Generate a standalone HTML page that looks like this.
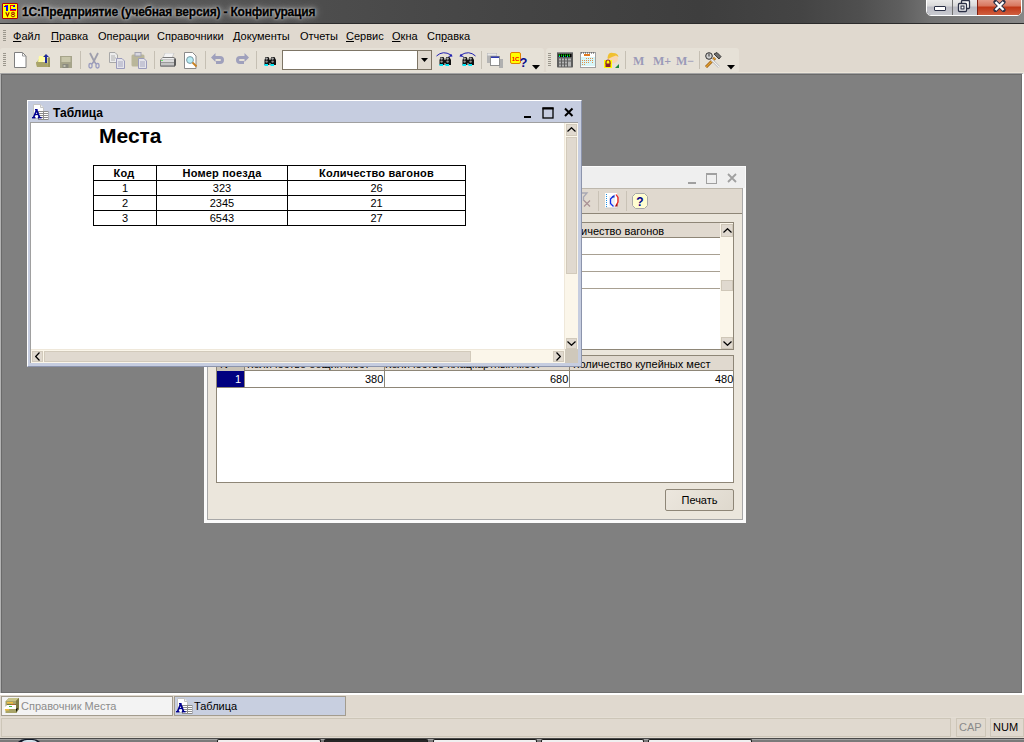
<!DOCTYPE html>
<html><head><meta charset="utf-8">
<style>
*{margin:0;padding:0;box-sizing:border-box}
html,body{width:1024px;height:742px;overflow:hidden;background:#808080;font-family:"Liberation Sans",sans-serif;font-size:11px;color:#000;position:relative}
div,span,svg{position:absolute}
.t{white-space:nowrap;line-height:13px}
#title{left:0;top:0;width:1024px;height:24px;background:linear-gradient(90deg,#7a7a7a 0px,#6e6e6e 30px,#5c5c5c 120px,#4e4e4e 300px,#454545 500px,#3e3e3e 700px,#444 800px,#4f4f4f 860px,#5e5e5e 900px,#727272 930px,#888 1024px);border-bottom:1px solid #2c2c2c}
#menubar{left:0;top:24px;width:1024px;height:24px;background:#e0d9cf}
#toolbar{left:0;top:48px;width:1024px;height:25px;background:#e0d9cf;box-shadow:inset 0 -1px 0 #ebe5d9}
.band{top:0;height:25px;background:#e6e1d7;border-radius:3px}
.grip{width:3px;background:repeating-linear-gradient(180deg,#9a968c 0,#9a968c 1px,transparent 1px,transparent 2px)}
.sep{top:3px;width:1px;height:18px;background:#c5bfb3}
.menu .t{top:6px}
.u{text-decoration:underline;text-underline-offset:1px}
#mdi{left:0;top:73px;width:1024px;height:620px;background:#808080;border-top:1px solid #a4a4a4;border-left:1px solid #b4b4b4;border-right:2px solid #fff;box-shadow:inset 1px 1px 0 #6a6a6a,inset -1px -1px 0 #6e6e6e}
#tabs{left:0;top:693px;width:1024px;height:45px;background:#e0d9cf;border-top:2px solid #fff}
#taskbar{left:0;top:738px;width:1024px;height:4px;background:#7a7a7a;border-top:1px solid #4a4a4a;box-shadow:inset 0 1px 0 #a0a0a0}
</style></head><body>
<div id="title">
  <svg style="left:2px;top:3px" width="16" height="16" viewBox="0 0 16 16"><path d="M1 0h14l1 1v14l-1 1H1l-1-1V1z" fill="#b00000"/><rect x="1" y="1" width="14" height="14" fill="#ffff00"/><path d="M2 3h2V2h2v6H4V4H2z" fill="#0000ff"/><path d="M3 2h2v1H3z" fill="#ff0000"/><path d="M8 2h5v2h-2V3H9v3h5v2H8z" fill="#0000ff"/><path d="M8 2h4v1H9v4h5v1H8z" fill="#ff0000"/><path d="M3.8 9.2l1.7 4 1.7-4" fill="none" stroke="#a00000" stroke-width="1.1"/><ellipse cx="11" cy="10.2" rx="1.6" ry="1" fill="none" stroke="#a00000" stroke-width="0.9"/><ellipse cx="11" cy="12.6" rx="1.7" ry="1.2" fill="none" stroke="#a00000" stroke-width="0.9"/></svg>
  <span class="t" style="left:22px;top:6px;font-size:12px;font-weight:700;letter-spacing:-0.18px;-webkit-text-stroke:0.35px #000;text-shadow:0 0 2px rgba(255,255,255,.9),0 0 5px rgba(255,255,255,.7),0 0 10px rgba(230,230,230,.6)">1С:Предприятие (учебная версия) - Конфигурация</span>
  <div style="left:926px;top:-3px;width:96px;height:19px;border:1px solid #fff;border-radius:0 0 5px 5px;background:#3a3a3a;box-shadow:0 0 1px #777"></div>
  <div style="left:927px;top:-2px;width:26px;height:17px;border-radius:0 0 0 4px;border-right:1px solid #707070;background:linear-gradient(180deg,#f0f0f0 0%,#dadada 45%,#bcbcc4 55%,#c8cad0 100%)"></div>
  <div style="left:953px;top:-2px;width:25px;height:17px;border-right:1px solid #802010;background:linear-gradient(180deg,#f0f0f0 0%,#dadada 45%,#bcbcc4 55%,#c8cad0 100%)"></div>
  <div style="left:978px;top:-2px;width:43px;height:17px;border-radius:0 0 4px 0;background:linear-gradient(180deg,#e8a898 0%,#d87860 45%,#c03818 55%,#d06040 100%)"></div>
  <div style="left:934px;top:6px;width:12px;height:5px;border:1.5px solid #2a2f45;border-radius:1px;background:#fff"></div>
  <svg style="left:957px;top:0px" width="14" height="13" viewBox="0 0 14 13"><rect x="4.5" y="0.5" width="8" height="8" rx="1" fill="#fff" stroke="#2a2f45" stroke-width="1.3"/><rect x="1.5" y="3.5" width="8" height="8" rx="1" fill="#fff" stroke="#2a2f45" stroke-width="1.3"/><rect x="4" y="6" width="3" height="3" fill="none" stroke="#2a2f45" stroke-width="1.1"/></svg>
  <svg style="left:993px;top:0px" width="13" height="12" viewBox="0 0 13 12"><path d="M2.5 2l8 8M10.5 2l-8 8" stroke="#2a2f45" stroke-width="4.2" stroke-linecap="round"/><path d="M2.5 2l8 8M10.5 2l-8 8" stroke="#fff" stroke-width="2.4"/></svg>
</div>
<div id="menubar" class="menu">
  <div class="grip" style="left:3px;top:6px;height:12px"></div>
  <span class="t" style="left:13px"><span class="u" style="position:static">Ф</span>айл</span>
  <span class="t" style="left:51px"><span class="u" style="position:static">П</span>равка</span>
  <span class="t" style="left:98px">Операции</span>
  <span class="t" style="left:157px">Справочники</span>
  <span class="t" style="left:233px">Документы</span>
  <span class="t" style="left:300px">Отчеты</span>
  <span class="t" style="left:346px"><span class="u" style="position:static">С</span>ервис</span>
  <span class="t" style="left:392px"><span class="u" style="position:static">О</span>кна</span>
  <span class="t" style="left:427px">Сп<span class="u" style="position:static">р</span>авка</span>
</div>
<div id="toolbar">
  <div class="band" style="left:0;width:544px"></div>
  <div class="band" style="left:546px;width:193px"></div>

  <div class="grip" style="left:3px;top:5px;height:14px"></div>
  <svg style="left:14px;top:4px" width="13" height="16" viewBox="0 0 13 16"><path d="M0.5 0.5h8l3.5 3.5v11.5h-11.5z" fill="#fff" stroke="#7f7f7f"/><path d="M8.5 0.5v3.5h3.5" fill="none" stroke="#9a9a9a"/></svg>
  <svg style="left:35px;top:4px" width="17" height="16" viewBox="0 0 17 16"><path d="M1 11l3-4h8l-1 8H2z" fill="#b8b478"/><path d="M4 4h4l2-2v9H3z" fill="#fffca0"/><path d="M6 11h6V6" fill="#f4f4f4"/><path d="M1 10h11l3 5H2z" fill="#a9a46a"/><path d="M12 6h3v9h-2z" fill="#c8c47e"/><path d="M11 2l3 3h-2v6h-2V5H8z" fill="#1f2a9a"/><path d="M14 5v10" stroke="#6b6838" stroke-width="1"/></svg>
  <svg style="left:60px;top:8px" width="13" height="13" viewBox="0 0 13 13"><rect x="0" y="0" width="12" height="12" fill="#a6a48a"/><rect x="1.5" y="1" width="9" height="5" fill="#c8c6aa"/><rect x="2.5" y="8" width="6" height="4" fill="#8b8b80"/><rect x="3.5" y="9" width="2" height="2" fill="#c0c0b0"/></svg>
  <div class="sep" style="left:80px"></div>
  <svg style="left:88px;top:4px" width="12" height="17" viewBox="0 0 12 17"><path d="M2 1l4 8 4-8" fill="none" stroke="#9e9eac" stroke-width="1.8"/><path d="M6 9L4 12M6 9l2 3" stroke="#9c9cb4" stroke-width="1.5"/><rect x="1" y="11.5" width="3" height="4.5" rx="1.4" fill="none" stroke="#9a9cc0" stroke-width="1.3"/><rect x="8" y="11.5" width="3" height="4.5" rx="1.4" fill="none" stroke="#9a9cc0" stroke-width="1.3"/></svg>
  <svg style="left:109px;top:4px" width="17" height="17" viewBox="0 0 17 17"><path d="M0.5 0.5h5.5l2.5 2.5v7.5h-8z" fill="#ececec" stroke="#a8a8a8"/><path d="M2 4h4M2 6h5M2 8h4" stroke="#b0b0b0"/><path d="M7.5 6.5h5.5l2.5 2.5v7.5h-8z" fill="#e4e4ea" stroke="#9c9cbc"/><path d="M9 10h5M9 12h5M9 14h5" stroke="#a8a8c0"/></svg>
  <svg style="left:131px;top:4px" width="17" height="17" viewBox="0 0 17 17"><rect x="0.5" y="2.5" width="13" height="12" rx="1.5" fill="#b9b69a"/><rect x="4" y="0.5" width="6" height="3.5" fill="#d8d8e0" stroke="#a4a4b0"/><path d="M7.5 6.5h5.5l2.5 2.5v7.5h-8z" fill="#e4e4ea" stroke="#9c9cbc"/><path d="M9 10h5M9 12h5M9 14h5" stroke="#a8a8c0"/></svg>
  <div class="sep" style="left:154px"></div>
  <svg style="left:160px;top:5px" width="17" height="14" viewBox="0 0 17 14"><path d="M5 0h9l-2 5H3z" fill="#f4f4f4" stroke="#c8c8c8" stroke-width="0.8"/><path d="M3 4h11l2 2v6l-2 2H1l-1-1V7z" fill="#7a7a7a"/><path d="M2.5 5h11l1.5 1.5H1z" fill="#f0f0f0"/><rect x="1" y="6.5" width="13" height="2.5" fill="#dcdcdc"/><rect x="1" y="9" width="13" height="1" fill="#9a9a9a"/><rect x="1" y="10" width="13" height="2.5" fill="#c4c4c4"/><path d="M14 6.5l2-1v6.5l-2 2z" fill="#5c5c5c"/><rect x="1" y="12.5" width="13" height="1.5" fill="#8c8c8c"/><rect x="1.5" y="7" width="1" height="1" fill="#00e000"/></svg>
  <svg style="left:184px;top:4px" width="14" height="17" viewBox="0 0 14 17"><path d="M0.5 0.5h8l3.5 3.5v12.5h-11.5z" fill="#fff" stroke="#8a8a8a"/><circle cx="6" cy="8" r="3.4" fill="#b8ecf4" stroke="#7a9aa4"/><path d="M8.5 10.5l4 4" stroke="#c88020" stroke-width="1.8"/></svg>
  <div class="sep" style="left:205px"></div>
  <svg style="left:211px;top:5px" width="14" height="14" viewBox="0 0 14 14"><path d="M0 4.5L4.5 0v3h4.5a4 4 0 0 1 0 8H5v-3h4a1 1 0 0 0 0-2H4.5v3z" fill="#9fa0bc"/></svg>
  <svg style="left:235px;top:5px" width="14" height="14" viewBox="0 0 14 14"><path d="M14 4.5L9.5 0v3H5a4 4 0 0 0 0 8h4v-3H5a1 1 0 0 1 0-2h4.5v3z" fill="#9fa0bc"/></svg>
  <div class="sep" style="left:256px"></div>
  <svg style="left:264px;top:8px" width="13" height="11" viewBox="0 0 13 11"><path d="M1.5 1h3l1 2v6H0.5V4z M7.5 1h3l1.5 3v5H6.5V3z" fill="#101010"/><rect x="5" y="4" width="2" height="3" fill="#101010"/><circle cx="2.6" cy="2.6" r="1.2" fill="#a8a8a8"/><circle cx="2.6" cy="5.6" r="1.2" fill="#909090"/><circle cx="8.6" cy="2.6" r="1.2" fill="#a8a8a8"/><circle cx="8.6" cy="5.6" r="1.2" fill="#909090"/><rect x="0.5" y="8" width="3.5" height="2" fill="#00e4f4"/><rect x="6.5" y="8" width="3.5" height="2" fill="#00e4f4"/></svg>
  <div style="left:282px;top:2px;width:150px;height:20px;background:#fff;border:1px solid #7d7566"></div>
  <div style="left:417px;top:3px;width:14px;height:18px;background:#e0d9cf;border-left:1px solid #7d7566"></div>
  <svg style="left:421px;top:10px" width="7" height="4" viewBox="0 0 7 4"><path d="M0 0h7L3.5 4z" fill="#000"/></svg>
  <svg style="left:436px;top:3px" width="17" height="15" viewBox="0 0 17 15"><path d="M0.5 5Q7-1 15 4" fill="none" stroke="#2020b0" stroke-width="1"/><path d="M16.5 5.5l-4.5 0.5 3.5-3z" fill="#2020b0"/><g transform="translate(3,5)"><path d="M1.5 1h3l1 2v6H0.5V4z M7.5 1h3l1.5 3v5H6.5V3z" fill="#101010"/><rect x="5" y="4" width="2" height="3" fill="#101010"/><circle cx="2.6" cy="2.6" r="1.2" fill="#a8a8a8"/><circle cx="2.6" cy="5.6" r="1.2" fill="#909090"/><circle cx="8.6" cy="2.6" r="1.2" fill="#a8a8a8"/><circle cx="8.6" cy="5.6" r="1.2" fill="#909090"/><rect x="0.5" y="8" width="3.5" height="2" fill="#00e4f4"/><rect x="6.5" y="8" width="3.5" height="2" fill="#00e4f4"/></g></svg>
  <svg style="left:459px;top:3px" width="17" height="15" viewBox="0 0 17 15"><path d="M16.5 5Q10-1 2 4" fill="none" stroke="#2020b0" stroke-width="1"/><path d="M0.5 5.5l4.5 0.5-3.5-3z" fill="#2020b0"/><g transform="translate(3,5)"><path d="M1.5 1h3l1 2v6H0.5V4z M7.5 1h3l1.5 3v5H6.5V3z" fill="#101010"/><rect x="5" y="4" width="2" height="3" fill="#101010"/><circle cx="2.6" cy="2.6" r="1.2" fill="#a8a8a8"/><circle cx="2.6" cy="5.6" r="1.2" fill="#909090"/><circle cx="8.6" cy="2.6" r="1.2" fill="#a8a8a8"/><circle cx="8.6" cy="5.6" r="1.2" fill="#909090"/><rect x="0.5" y="8" width="3.5" height="2" fill="#00e4f4"/><rect x="6.5" y="8" width="3.5" height="2" fill="#00e4f4"/></g></svg>
  <div class="sep" style="left:481px"></div>
  <svg style="left:487px;top:5px" width="17" height="15" viewBox="0 0 17 15"><rect x="0" y="0" width="10" height="10" fill="#b4b4b4"/><rect x="0.5" y="0.5" width="9" height="2" fill="#e8e8e8"/><rect x="12" y="6" width="4" height="9" fill="#b0b0b0"/><rect x="3" y="3" width="10" height="10" fill="#909090"/><rect x="4" y="5" width="8" height="7" fill="#fff"/><rect x="4" y="3.5" width="8" height="1.5" fill="#303ab0"/></svg>
  <svg style="left:510px;top:4px" width="18" height="16" viewBox="0 0 18 16"><rect x="0.5" y="0.5" width="10" height="11" rx="1.5" fill="#ffff00" stroke="#e08000"/><text x="5.5" y="8.5" font-size="6" font-weight="700" font-family="Liberation Sans" fill="#ff0000" text-anchor="middle">1С</text><text x="13.5" y="15" font-size="13" font-weight="700" font-family="Liberation Sans" fill="#0a0a8a" text-anchor="middle">?</text></svg>
  <svg style="left:532px;top:17px" width="8" height="5" viewBox="0 0 8 5"><path d="M0 0h8L4 4.5z" fill="#000"/></svg>
  <div class="grip" style="left:548px;top:5px;height:14px"></div>
  <svg style="left:557px;top:4px" width="17" height="16" viewBox="0 0 17 16"><rect x="0" y="0" width="16" height="15.5" rx="0.8" fill="#5e5e5e"/><rect x="0" y="0" width="16" height="1" fill="#8a8a8a"/><rect x="1.5" y="2" width="13" height="3" fill="#000"/><path d="M2 3.5h12" stroke="#00e000" stroke-width="2" stroke-dasharray="1 1"/><path d="M2 4.5h12" stroke="#00d0e0" stroke-width="1" stroke-dasharray="1 3"/><g fill="#b4b4b4"><rect x="2" y="6.5" width="2" height="2"/><rect x="5" y="6.5" width="2" height="2"/><rect x="8" y="6.5" width="2" height="2"/><rect x="2" y="9.5" width="2" height="2"/><rect x="5" y="9.5" width="2" height="2"/><rect x="8" y="9.5" width="2" height="2"/><rect x="2" y="12.5" width="2" height="2"/><rect x="5" y="12.5" width="2" height="2"/><rect x="8" y="12.5" width="2" height="2"/><rect x="11" y="6.5" width="3" height="2"/><rect x="11" y="9.5" width="3" height="5"/></g></svg>
  <svg style="left:580px;top:4px" width="17" height="17" viewBox="0 0 17 17"><rect x="0.5" y="0.5" width="15" height="15" fill="#fff" stroke="#a0a0a0"/><path d="M1 1h14" stroke="#404040" stroke-dasharray="1 1"/><rect x="1" y="5" width="14" height="9" fill="#d8f6f8"/><g fill="#e0904a"><rect x="6" y="6" width="1" height="1"/><rect x="8" y="6" width="1" height="1"/><rect x="10" y="6" width="1" height="1"/><rect x="12" y="6" width="1" height="1"/><rect x="2" y="8" width="1" height="1"/><rect x="4" y="8" width="1" height="1"/><rect x="6" y="8" width="1" height="1"/><rect x="8" y="8" width="1" height="1"/><rect x="10" y="8" width="1" height="1"/><rect x="12" y="8" width="1" height="1"/><rect x="2" y="10" width="1" height="1"/><rect x="4" y="10" width="1" height="1"/><rect x="6" y="10" width="1" height="1"/><rect x="8" y="10" width="1" height="1"/><rect x="12" y="10" width="1" height="1"/><rect x="2" y="12" width="1" height="1"/><rect x="4" y="12" width="1" height="1"/></g><rect x="4" y="2" width="6" height="2" fill="#e07a20"/></svg>
  <svg style="left:603px;top:4px" width="17" height="17" viewBox="0 0 17 17"><path d="M12 16l4-4v4z" fill="#208a40"/><circle cx="10" cy="6.5" r="5" fill="#f8d6b0"/><path d="M4.5 6Q5 0 10 1q5 0 5.5 4L13 3.5 9 5 5 7z" fill="#f0c030"/><rect x="1" y="8" width="8" height="8" fill="#ffff00"/><path d="M3 12v-2a2 2 0 0 1 4 0v2" fill="none" stroke="#8a2030" stroke-width="1.2"/><rect x="2.5" y="11.5" width="5" height="3.5" fill="#8a2030"/></svg>
  <div class="sep" style="left:625px"></div>
  <span class="t" style="left:633px;top:7px;font-family:'Liberation Serif';font-size:12px;font-weight:700;color:#9a9ab8">M</span>
  <span class="t" style="left:653px;top:7px;font-family:'Liberation Serif';font-size:12px;font-weight:700;color:#9a9ab8">M+</span>
  <span class="t" style="left:676px;top:7px;font-family:'Liberation Serif';font-size:12px;font-weight:700;color:#9a9ab8">M&#8722;</span>
  <div class="sep" style="left:699px"></div>
  <svg style="left:705px;top:4px" width="17" height="17" viewBox="0 0 17 17"><path d="M1 15L10 6" stroke="#9a5a10" stroke-width="3"/><path d="M1 15L10 6" stroke="#e0a030" stroke-width="1.4"/><path d="M6 7l8 8" stroke="#c8c8c8" stroke-width="2.6"/><path d="M6 7l8 8" stroke="#f0f0f0" stroke-width="1"/><circle cx="4" cy="4" r="3.3" fill="#d0d0d0" stroke="#303030" stroke-width="1"/><path d="M4 1.5v3" stroke="#303030"/><path d="M9 2l3-1.5 4 4-2 2.5z" fill="#707070" stroke="#202020" stroke-width="0.8"/></svg>
  <svg style="left:727px;top:17px" width="8" height="5" viewBox="0 0 8 5"><path d="M0 0h8L4 4.5z" fill="#000"/></svg>
</div>
<div id="mdi"></div>
<!-- back window -->
<div id="back" style="left:204px;top:166px;width:542px;height:357px;background:#fbfbfb">
  <div style="left:1px;top:1px;width:540px;height:21px;background:#efefef"></div>
  <svg style="left:484px;top:7px" width="50" height="12" viewBox="0 0 50 12"><rect x="0" y="9" width="8" height="2" fill="#a0a0a0"/><rect x="18.5" y="0.5" width="10" height="10" fill="none" stroke="#a0a0a0" stroke-width="1"/><rect x="18" y="0" width="11" height="2" fill="#a0a0a0"/><path d="M40 1l8 8M48 1l-8 8" stroke="#a0a0a0" stroke-width="1.8"/></svg>
  <div style="left:3px;top:22px;width:536px;height:332px;background:#ebe6dc;border:1px solid #a8a8a8;border-top:none"></div>
  <!-- toolbar -->
  <div style="left:4px;top:22px;width:534px;height:26px;background:#e0d9cf;border-bottom:1px solid #8e8677;border-top:1px solid #bdb7ac"></div>
  <svg style="left:374px;top:26px" width="14" height="15" viewBox="0 0 14 15"><path d="M0 1h9L5.5 5v4" fill="none" stroke="#a8a8b4" stroke-width="1.3"/><path d="M6 8.5l6 6M12 8.5l-6 6" stroke="#a89094" stroke-width="1.2"/></svg>
  <div style="left:394px;top:25px;width:1px;height:20px;background:#c9c2b6"></div>
  <svg style="left:401px;top:27px" width="16" height="16" viewBox="0 0 16 16"><rect x="0" y="0" width="12" height="15" fill="#fff"/><rect x="0.5" y="14.5" width="12" height="1" fill="#c8c8c8"/><path d="M1.5 1v14" stroke="#2090e0" stroke-dasharray="1 1"/><path d="M4 4h6M4 6h6M4 8h6M4 10h6M4 12h6" stroke="#d8d8e0" stroke-width="0.8"/><path d="M8.5 13.5L5.5 10.5V6l3-3" fill="none" stroke="#1030f0" stroke-width="1.3"/><path d="M9.5 1.5v3h-3z" fill="#1030c0"/><path d="M11 1.5l2 3v4.5l-2 3.5" fill="none" stroke="#f02020" stroke-width="1.3"/><path d="M9.5 13.5h3v-3z" fill="#a01010"/></svg>
  <div style="left:422px;top:25px;width:1px;height:20px;background:#c9c2b6"></div>
  <svg style="left:428px;top:27px" width="17" height="17" viewBox="0 0 17 17"><path d="M3.5 0.5h9l3 3v9l-3 3h-9l-3-3v-9z" fill="#fffdd0" stroke="#a8a8a8"/><text x="8" y="13" font-size="12" font-weight="700" font-family="Liberation Sans" fill="#00008a" text-anchor="middle">?</text></svg>
  <!-- upper table -->
  <div style="left:12px;top:56px;width:518px;height:128px;background:#fff;border:1px solid #8e8677"></div>
  <div style="left:13px;top:57px;width:503px;height:15px;background:#e0d9cf;border-bottom:1px solid #8e8677"></div>
  <span class="t" style="left:377px;top:59px;color:#000">ичество вагонов</span>
  <div style="left:13px;top:88px;width:503px;height:1px;background:#a8a092"></div>
  <div style="left:13px;top:105px;width:503px;height:1px;background:#a8a092"></div>
  <div style="left:13px;top:122px;width:503px;height:1px;background:#a8a092"></div>
  <div style="left:516px;top:57px;width:13px;height:126px;background:#fbf6ea"></div>
  <div style="left:517px;top:58px;width:12px;height:13px;background:#e0d9cf;border:1px solid #cfc7b8"></div>
  <svg style="left:519px;top:62px" width="9" height="5" viewBox="0 0 9 5"><path d="M0.5 4.5L4.5 0.7 8.5 4.5" fill="none" stroke="#000" stroke-width="1.2"/></svg>
  <div style="left:517px;top:114px;width:12px;height:11px;background:#e0d9cf;border:1px solid #cfc7b8"></div>
  <div style="left:517px;top:171px;width:12px;height:12px;background:#e0d9cf;border:1px solid #cfc7b8"></div>
  <svg style="left:519px;top:175px" width="9" height="5" viewBox="0 0 9 5"><path d="M0.5 0.5L4.5 4.3 8.5 0.5" fill="none" stroke="#000" stroke-width="1.2"/></svg>
  <!-- lower table -->
  <div style="left:12px;top:189px;width:518px;height:128px;background:#fff;border:1px solid #8e8677"></div>
  <div style="left:13px;top:190px;width:516px;height:15px;background:#e0d9cf;border-bottom:1px solid #8e8677"></div>
  <div style="left:13px;top:190px;width:27px;height:15px;background:#c8c2b6"></div>
  <span class="t" style="left:16px;top:192px">N</span>
  <span class="t" style="left:43px;top:192px">Количество общих мест</span>
  <span class="t" style="left:181px;top:192px">Количество плацкартных мест</span>
  <span class="t" style="left:369px;top:192px">Количество купейных мест</span>
  <div style="left:13px;top:205px;width:27px;height:16px;background:#000080"></div>
  <span class="t" style="left:31px;top:207px;color:#fff">1</span>
  <div style="left:40px;top:190px;width:1px;height:31px;background:#8e8677"></div>
  <div style="left:180px;top:190px;width:1px;height:31px;background:#8e8677"></div>
  <div style="left:365px;top:190px;width:1px;height:31px;background:#8e8677"></div>
  <div style="left:13px;top:221px;width:516px;height:1px;background:#8e8677"></div>
  <span class="t" style="left:161px;top:207px;width:18px;text-align:right">380</span>
  <span class="t" style="left:346px;top:207px;width:18px;text-align:right">680</span>
  <span class="t" style="left:511px;top:207px;width:18px;text-align:right">480</span>
  <!-- button -->
  <div style="left:461px;top:323px;width:69px;height:22px;background:linear-gradient(135deg,#ece7de,#ded8cd);border:1px solid #8e8677;border-radius:2px"></div>
  <span class="t" style="left:461px;top:328px;width:69px;text-align:center">Печать</span>
</div>

<!-- front window -->
<div id="front" style="left:27px;top:100px;width:555px;height:267px;background:#c6cde0;border-top:1px solid #fff;border-left:1px solid #fff;border-bottom:1px solid #8c94ac;border-right:1px solid #8c94ac">
  <svg style="left:4px;top:3px" width="17" height="17" viewBox="0 0 17 17"><path d="M1.5 0.5h7l3 3v11h-10z" fill="#fff" stroke="#c4c4c4"/><path d="M8.5 0.5v3h3" fill="#f4f4f4" stroke="#c4c4c4"/><rect x="6" y="7" width="10.5" height="9" fill="#8c8c8c"/><g fill="#fff"><rect x="7" y="8" width="4" height="1"/><rect x="12" y="8" width="4" height="1"/><rect x="7" y="10" width="4" height="1"/><rect x="12" y="10" width="4" height="1"/><rect x="7" y="12" width="4" height="1"/><rect x="12" y="12" width="4" height="1"/><rect x="7" y="14" width="4" height="1"/><rect x="12" y="14" width="4" height="1"/></g><path d="M4.6 6L1.6 13.5M4.6 6l3 7.5" stroke="#000090" stroke-width="1.7" fill="none"/><path d="M2.5 10.5h4.5" stroke="#000090" stroke-width="1.2"/><rect x="3" y="5" width="2.6" height="1.4" fill="#000090"/><rect x="0" y="13" width="3.5" height="1.4" fill="#000090"/><rect x="5.8" y="13" width="3.8" height="1.4" fill="#000090"/></svg>
  <span class="t" style="left:25px;top:6px;font-size:12px;font-weight:700">Таблица</span>
  <svg style="left:496px;top:6px" width="52" height="12" viewBox="0 0 52 12"><rect x="0" y="9" width="7" height="2" fill="#000"/><rect x="19" y="1" width="10" height="10" fill="none" stroke="#000" stroke-width="1.3"/><rect x="18.5" y="0.5" width="11" height="2" fill="#000"/><path d="M41 1.5l7.5 7.5M48.5 1.5L41 9" stroke="#000" stroke-width="2"/></svg>
  <div style="left:2px;top:21px;width:548px;height:241px;background:#fff;border-left:1px solid #a0a0a0;border-top:1px solid #a0a0a0"></div>
  <span class="t" style="left:71px;top:23px;font-size:21px;font-weight:700;line-height:24px">Места</span>
  <!-- table -->
  <div style="left:65px;top:64px;width:373px;height:61px;border:1px solid #000"></div>
  <div style="left:66px;top:79px;width:371px;height:1px;background:#000"></div>
  <div style="left:66px;top:94px;width:371px;height:1px;background:#000"></div>
  <div style="left:66px;top:109px;width:371px;height:1px;background:#000"></div>
  <div style="left:128px;top:65px;width:1px;height:59px;background:#000"></div>
  <div style="left:259px;top:65px;width:1px;height:59px;background:#000"></div>
  <span class="t" style="left:65px;top:66px;width:62px;text-align:center;font-weight:700;letter-spacing:0.2px">Код</span>
  <span class="t" style="left:129px;top:66px;width:130px;text-align:center;font-weight:700;letter-spacing:0.2px">Номер поезда</span>
  <span class="t" style="left:260px;top:66px;width:177px;text-align:center;font-weight:700;letter-spacing:0.2px">Количество вагонов</span>
  <span class="t" style="left:66px;top:81px;width:62px;text-align:center">1</span>
  <span class="t" style="left:129px;top:81px;width:130px;text-align:center">323</span>
  <span class="t" style="left:260px;top:81px;width:177px;text-align:center">26</span>
  <span class="t" style="left:66px;top:96px;width:62px;text-align:center">2</span>
  <span class="t" style="left:129px;top:96px;width:130px;text-align:center">2345</span>
  <span class="t" style="left:260px;top:96px;width:177px;text-align:center">21</span>
  <span class="t" style="left:66px;top:111px;width:62px;text-align:center">3</span>
  <span class="t" style="left:129px;top:111px;width:130px;text-align:center">6543</span>
  <span class="t" style="left:260px;top:111px;width:177px;text-align:center">27</span>
  <!-- v scroll -->
  <div style="left:536px;top:22px;width:14px;height:226px;background:#fbf6ea;border-left:1px solid #efe8da"></div>
  <div style="left:538px;top:23px;width:11px;height:12px;background:#e0d9cf;border:1px solid #d2cabb"></div>
  <svg style="left:539px;top:26px" width="9" height="5" viewBox="0 0 9 5"><path d="M0.5 4.5L4.5 0.7 8.5 4.5" fill="none" stroke="#000" stroke-width="1.2"/></svg>
  <div style="left:538px;top:36px;width:11px;height:137px;background:#e0d9cf;border:1px solid #d2cabb"></div>
  <div style="left:538px;top:237px;width:11px;height:11px;background:#e0d9cf;border:1px solid #d2cabb"></div>
  <svg style="left:539px;top:240px" width="9" height="5" viewBox="0 0 9 5"><path d="M0.5 0.5L4.5 4.3 8.5 0.5" fill="none" stroke="#000" stroke-width="1.2"/></svg>
  <!-- h scroll -->
  <div style="left:3px;top:248px;width:547px;height:14px;background:#fbf6ea;border-top:1px solid #efe8da"></div>
  <div style="left:4px;top:250px;width:11px;height:11px;background:#e0d9cf;border:1px solid #d2cabb"></div>
  <svg style="left:7px;top:251px" width="5" height="9" viewBox="0 0 5 9"><path d="M4.5 0.5L0.7 4.5 4.5 8.5" fill="none" stroke="#000" stroke-width="1.2"/></svg>
  <div style="left:16px;top:250px;width:427px;height:11px;background:#e0d9cf;border:1px solid #d2cabb"></div>
  <div style="left:525px;top:250px;width:11px;height:11px;background:#e0d9cf;border:1px solid #d2cabb"></div>
  <svg style="left:528px;top:251px" width="5" height="9" viewBox="0 0 5 9"><path d="M0.5 0.5L4.3 4.5 0.5 8.5" fill="none" stroke="#000" stroke-width="1.2"/></svg>
  <div style="left:537px;top:248px;width:13px;height:14px;background:#cfc8bb"></div>
</div>
<div id="tabs">
  <div style="left:1px;top:1px;width:172px;height:20px;background:#f3f3f3;border:1px solid #a39c8e"></div>
  <svg style="left:3px;top:3px" width="17" height="16" viewBox="0 0 17 16"><path d="M3 3l3-3h10v11l-3 4H3z" fill="#8e8c52"/><path d="M6 0h10l-3 3H3z" fill="#c8c48a"/><rect x="2.5" y="3" width="11" height="12" fill="#a8a468"/><path d="M13 3l3-3v11l-3 4z" fill="#7c7a44"/><rect x="4" y="4" width="6" height="1.5" fill="#f0c040"/><rect x="4" y="6.5" width="9" height="1.5" fill="#404020"/><rect x="8" y="6.5" width="4" height="1.5" fill="#f06010"/><path d="M1 10l3-3h9v4H1z" fill="#fff"/><rect x="6" y="8" width="3" height="1" fill="#40c040"/><rect x="2" y="11" width="4" height="1.5" fill="#f0c040"/><path d="M13 11l2-1-2 4z" fill="#000"/></svg>
  <span class="t" style="left:21px;top:5px;color:#8c8c8c">Справочник Места</span>
  <div style="left:174px;top:1px;width:172px;height:20px;background:#c8cfe0;border:1px solid #a39c8e"></div>
  <svg style="left:176px;top:3px" width="17" height="17" viewBox="0 0 17 17"><path d="M1.5 0.5h7l3 3v11h-10z" fill="#fff" stroke="#c4c4c4"/><path d="M8.5 0.5v3h3" fill="#f4f4f4" stroke="#c4c4c4"/><rect x="6" y="7" width="10.5" height="9" fill="#8c8c8c"/><g fill="#fff"><rect x="7" y="8" width="4" height="1"/><rect x="12" y="8" width="4" height="1"/><rect x="7" y="10" width="4" height="1"/><rect x="12" y="10" width="4" height="1"/><rect x="7" y="12" width="4" height="1"/><rect x="12" y="12" width="4" height="1"/><rect x="7" y="14" width="4" height="1"/><rect x="12" y="14" width="4" height="1"/></g><path d="M4.6 6L1.6 13.5M4.6 6l3 7.5" stroke="#000090" stroke-width="1.7" fill="none"/><path d="M2.5 10.5h4.5" stroke="#000090" stroke-width="1.2"/><rect x="3" y="5" width="2.6" height="1.4" fill="#000090"/><rect x="0" y="13" width="3.5" height="1.4" fill="#000090"/><rect x="5.8" y="13" width="3.8" height="1.4" fill="#000090"/></svg>
  <span class="t" style="left:194px;top:5px">Таблица</span>
  <div style="left:0;top:22px;width:1024px;height:1px;background:#e4ded4"></div>
  <div style="left:1px;top:23px;width:950px;height:19px;border:1px solid #cdc6b8"></div>
  <div style="left:956px;top:23px;width:30px;height:19px;border:1px solid #cdc6b8"></div>
  <span class="t" style="left:959px;top:26px;color:#8a8a8a">CAP</span>
  <div style="left:990px;top:23px;width:34px;height:19px;border:1px solid #cdc6b8"></div>
  <span class="t" style="left:993px;top:26px">NUM</span>
</div>
<div id="taskbar">
  <div style="left:15px;top:0px;width:28px;height:10px;border-radius:14px 14px 0 0;background:#101828"></div>
  <div style="left:19px;top:1px;width:21px;height:8px;border-radius:10px 10px 0 0;background:linear-gradient(180deg,#dce8f0,#9cb8cc)"></div>
  <div style="left:217px;top:0;width:104px;height:4px;border:1px solid #1a1a1a;border-bottom:none;border-radius:2px 2px 0 0;background:#f2eeee"></div>
  <div style="left:324px;top:0;width:104px;height:4px;border:1px solid #1a1a1a;border-bottom:none;border-radius:2px 2px 0 0;background:#262626"></div>
  <div style="left:433px;top:0;width:104px;height:4px;border:1px solid #1a1a1a;border-bottom:none;border-radius:2px 2px 0 0;background:#f0f0f0"></div>
  <div style="left:541px;top:0;width:103px;height:4px;border:1px solid #1a1a1a;border-bottom:none;border-radius:2px 2px 0 0;background:#f0f0f0"></div>
  <div style="left:648px;top:0;width:104px;height:4px;border:1px solid #1a1a1a;border-bottom:none;border-radius:2px 2px 0 0;background:#f0f0f0"></div>
</div>
</body></html>
